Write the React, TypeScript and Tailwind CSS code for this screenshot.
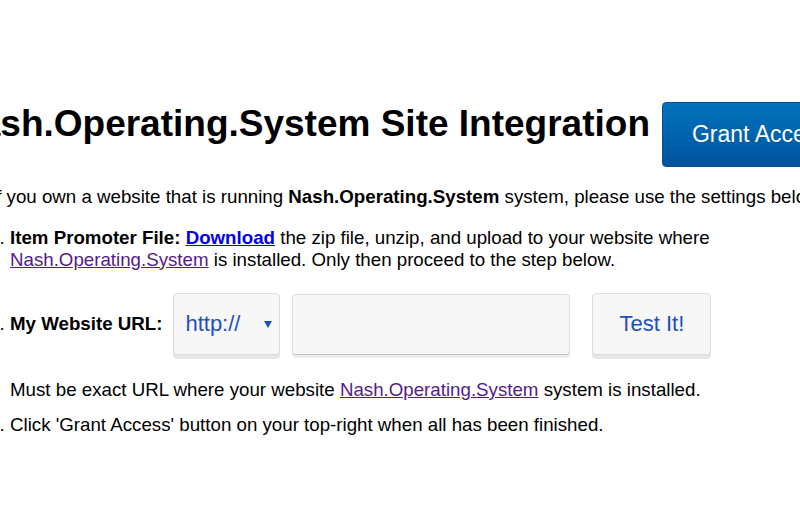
import React from "react";

const SiteIntegrationPage: React.FC = () => {
  return (
    <div className="w-[800px] h-[510px] overflow-hidden bg-white text-black font-['Liberation_Sans',Arial,sans-serif]">
      <div className="flex items-start pt-[102px] -ml-[47px]">
        <h1 className="shrink-0 text-[37px] font-bold leading-[43px] whitespace-nowrap">
          Nash.Operating.System Site Integration
        </h1>
        <button className="shrink-0 ml-[12px] h-[65px] px-[29px] rounded-[4px] border border-[#004f93] bg-gradient-to-b from-[#0073bb] to-[#00529e] text-white text-[23px] whitespace-nowrap">
          Grant Access
        </button>
      </div>

      <p className="mt-[19px] -ml-[9px] text-[18.72px] leading-[21.5px] whitespace-nowrap">
        If you own a website that is running <b>Nash.Operating.System</b> system, please use the settings below
      </p>

      <ol className="mt-[19.5px] ml-[10px] list-decimal text-[18.72px] leading-[21.5px]">
        <li className="w-[720px]">
          <b>Item Promoter File: </b>
          <a href="#" className="font-bold text-[#0000ee] underline">
            Download
          </a>{" "}
          the zip file, unzip, and upload to your website where
          <br />
          <a href="#" className="text-[#551a8b] underline">
            Nash.Operating.System
          </a>{" "}
          is installed. Only then proceed to the step below.
        </li>

        <li className="mt-[23px]">
          <div className="flex items-center">
            <b className="whitespace-nowrap">My Website URL:</b>
            <div className="ml-[11px] flex items-center justify-between w-[107px] h-[62px] pl-[11px] pr-[7px] rounded-[4px] border border-[#dddddd] bg-[#f7f7f7] shadow-[0_4px_0_#e6e6e6] text-[22px] text-[#1f4fbf]">
              <span>http://</span>
              <span className="w-0 h-0 border-l-[4px] border-r-[4px] border-t-[7px] border-l-transparent border-r-transparent border-t-[#1f4fbf]" />
            </div>
            <input
              type="text"
              className="ml-[12px] w-[278px] h-[61px] rounded-[4px] border border-[#dddddd] border-b-[#c4c4c4] bg-[#f7f7f7] shadow-[0_3px_0_#ebebeb] outline-none"
            />
            <button className="ml-[22px] w-[119px] h-[62px] rounded-[4px] border border-[#dddddd] bg-[#f7f7f7] shadow-[0_4px_0_#e6e6e6] text-[22px] text-[#1f4fbf]">
              Test It!
            </button>
          </div>
          <div className="mt-[24px] whitespace-nowrap">
            Must be exact URL where your website{" "}
            <a href="#" className="text-[#551a8b] underline">
              Nash.Operating.System
            </a>{" "}
            system is installed.
          </div>
        </li>

        <li className="mt-[13.5px] whitespace-nowrap">
          Click 'Grant Access' button on your top-right when all has been finished.
        </li>
      </ol>
    </div>
  );
};

export default function App() {
  return <SiteIntegrationPage />;
}
